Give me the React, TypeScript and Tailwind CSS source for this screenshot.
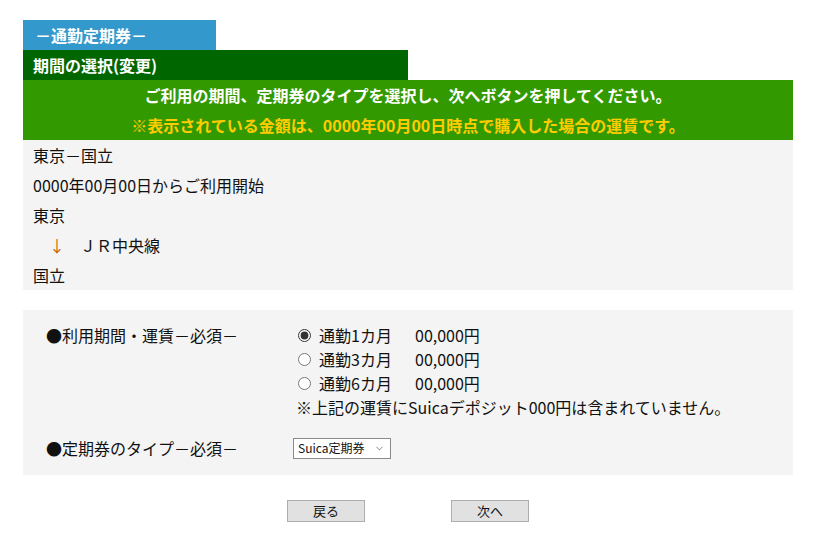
import { ChevronDown } from "lucide-react";

const font = { fontFamily: '"Noto Sans CJK JP", "Noto Sans", sans-serif' };

const plans = [
  { label: "通勤1カ月", price: "00,000円", checked: true },
  { label: "通勤3カ月", price: "00,000円", checked: false },
  { label: "通勤6カ月", price: "00,000円", checked: false },
];

export default function App() {
  return (
    <div className="min-h-screen bg-white pt-[20px] px-[23px] text-[16px] text-[#111]" style={font}>
      <div className="w-[770px]">
        <div className="w-[193px] h-[30px] bg-[#3399cc] text-white font-bold flex items-center pl-[12px]">
          －通勤定期券－
        </div>
        <div className="w-[385px] h-[30px] bg-[#006600] text-white font-bold flex items-center pl-[10px]">
          期間の選択(変更)
        </div>
        <div className="bg-[#339900] font-bold text-center">
          <div className="h-[30px] leading-[30px] text-white">
            ご利用の期間、定期券のタイプを選択し、次へボタンを押してください。
          </div>
          <div className="h-[30px] leading-[30px] text-[#ffcc00]">
            ※表示されている金額は、0000年00月00日時点で購入した場合の運賃です。
          </div>
        </div>

        <div className="bg-[#f4f4f4] pl-[10px] leading-[30px]">
          <div>東京－国立</div>
          <div>0000年00月00日からご利用開始</div>
          <div>東京</div>
          <div className="flex">
            <span className="w-[16px] text-center text-[#cc6600] ml-[16px]">↓</span>
            <span className="ml-[15px]">ＪＲ中央線</span>
          </div>
          <div>国立</div>
        </div>

        <div className="mt-[20px] bg-[#f4f4f4] pt-[13px] pb-[15px] pl-[23px]">
          <div className="flex">
            <div className="w-[250px] leading-[24px]">●利用期間・運賃－必須－</div>
            <div className="leading-[24px]">
              {plans.map((p) => (
                <label key={p.label} className="flex items-center">
                  <input
                    type="radio"
                    name="plan"
                    defaultChecked={p.checked}
                    className="w-[13px] h-[13px] ml-[2px] mr-[8px] accent-[#333]"
                  />
                  <span className="w-[96px]">{p.label}</span>
                  <span>{p.price}</span>
                </label>
              ))}
              <div>※上記の運賃にSuicaデポジット000円は含まれていません。</div>
            </div>
          </div>
          <div className="flex items-center mt-[17px]">
            <div className="w-[247px]">●定期券のタイプ－必須－</div>
            <div className="relative w-[98px] h-[21px] border border-[#8a8a8a] bg-white text-[12px] flex items-center pl-[4px]">
              <select className="absolute inset-0 opacity-0">
                <option>Suica定期券</option>
              </select>
              <span>Suica定期券</span>
              <ChevronDown className="w-[11px] h-[11px] ml-auto mr-[5px] text-[#555]" strokeWidth={1.5} />
            </div>
          </div>
        </div>

        <div className="flex mt-[25px] pl-[264px] gap-[86px]">
          <button className="w-[78px] h-[22px] bg-[#e1e1e1] border border-[#adadad] text-[13px]">
            戻る
          </button>
          <button className="w-[78px] h-[22px] bg-[#e1e1e1] border border-[#adadad] text-[13px]">
            次へ
          </button>
        </div>
      </div>
    </div>
  );
}
